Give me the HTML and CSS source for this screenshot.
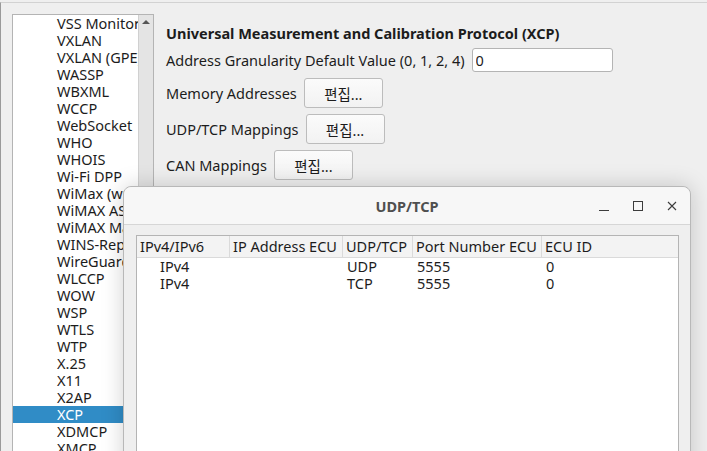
FILE: index.html
```html
<!DOCTYPE html>
<html lang="ko">
<head>
    <meta charset="UTF-8">
    <title>XCP</title>
    <link rel="stylesheet" href="styles.css">
</head>
<body>
    <div class="main">
        <div class="sidebar">
            <div class="listbox">
                <ul class="items">
                    <li>VSS Monitoring</li>
                    <li>VXLAN</li>
                    <li>VXLAN (GPE)</li>
                    <li>WASSP</li>
                    <li>WBXML</li>
                    <li>WCCP</li>
                    <li>WebSocket</li>
                    <li>WHO</li>
                    <li>WHOIS</li>
                    <li>Wi-Fi DPP</li>
                    <li>WiMax (wmx)</li>
                    <li>WiMAX ASN CP</li>
                    <li>WiMAX Mac-PHY</li>
                    <li>WINS-Replication</li>
                    <li>WireGuard</li>
                    <li>WLCCP</li>
                    <li>WOW</li>
                    <li>WSP</li>
                    <li>WTLS</li>
                    <li>WTP</li>
                    <li>X.25</li>
                    <li>X11</li>
                    <li>X2AP</li>
                    <li class="selected">XCP</li>
                    <li>XDMCP</li>
                    <li>XMCP</li>
                </ul>
                <div class="scrollbar">
                    <svg width="14" height="10" viewBox="0 0 14 10"><path d="M3 7 L7 3 L11 7 Z" fill="#555"/></svg>
                </div>
            </div>
        </div>

        <div class="prefs">
            <div class="prefs-title">Universal Measurement and Calibration Protocol (XCP)</div>
            <div class="row">
                <span>Address Granularity Default Value (0, 1, 2, 4)</span>
                <input class="field" type="text" value="0">
            </div>
            <div class="row">
                <span>Memory Addresses</span>
                <button class="btn">편집...</button>
            </div>
            <div class="row">
                <span>UDP/TCP Mappings</span>
                <button class="btn">편집...</button>
            </div>
            <div class="row">
                <span>CAN Mappings</span>
                <button class="btn">편집...</button>
            </div>
        </div>
    </div>

    <div class="dialog">
        <div class="titlebar">
            <span class="dialog-title">UDP/TCP</span>
            <div class="win-btns">
                <svg width="12" height="12" viewBox="0 0 12 12"><path d="M1 10.5 H11" stroke="#3c3c3c" stroke-width="1"/></svg>
                <svg width="12" height="12" viewBox="0 0 12 12"><rect x="1.5" y="1.5" width="9" height="9" fill="none" stroke="#3c3c3c" stroke-width="1"/></svg>
                <svg width="12" height="12" viewBox="0 0 12 12"><path d="M2 2 L10 10 M10 2 L2 10" stroke="#3c3c3c" stroke-width="1.1"/></svg>
            </div>
        </div>
        <div class="dialog-body">
            <div class="table">
                <div class="thead">
                    <div>IPv4/IPv6</div>
                    <div>IP Address ECU</div>
                    <div>UDP/TCP</div>
                    <div>Port Number ECU</div>
                    <div>ECU ID</div>
                </div>
                <div class="trow">
                    <div class="indent">IPv4</div>
                    <div></div>
                    <div>UDP</div>
                    <div>5555</div>
                    <div>0</div>
                </div>
                <div class="trow">
                    <div class="indent">IPv4</div>
                    <div></div>
                    <div>TCP</div>
                    <div>5555</div>
                    <div>0</div>
                </div>
            </div>
        </div>
    </div>
</body>
</html>
```

FILE: styles.css
```css
body {
    margin: 0;
    width: 707px;
    height: 451px;
    overflow: hidden;
    position: relative;
    background-color: #efefef;
    font-family: 'Noto Sans', 'Noto Sans CJK KR', sans-serif;
    font-size: 14.5px;
    color: #1c1c1c;
}

.main {
    display: flex;
    margin-top: 2px;
    border-top: 1px solid #d2d2d2;
    border-left: 1px solid #9a9a9a;
    height: 448px;
}

.sidebar {
    padding: 11px 0 0 11px;
}

.listbox {
    display: flex;
    width: 140px;
    height: 460px;
    background-color: white;
    border: 1px solid #b4b4b4;
}

.items {
    list-style: none;
    margin: 0;
    padding: 0;
    width: 125px;
    overflow: hidden;
}

.items li {
    height: 17px;
    line-height: 17px;
    padding-left: 44px;
    white-space: nowrap;
    overflow: hidden;
}

.items li.selected {
    background-color: #308cc6;
    color: white;
}

.scrollbar {
    width: 14px;
    background-color: #e4e4e4;
    border-left: 1px solid #d0d0d0;
}

.scrollbar svg {
    display: block;
    margin-top: 2px;
}

.prefs {
    padding: 20px 0 0 12px;
}

.prefs-title {
    font-weight: bold;
    height: 20px;
    line-height: 20px;
    margin-bottom: 5px;
    white-space: nowrap;
}

.row {
    display: flex;
    align-items: center;
    gap: 7px;
    margin-bottom: 6px;
    white-space: nowrap;
}

.field {
    width: 133px;
    height: 20px;
    border: 1px solid #b4b4b4;
    border-radius: 3px;
    padding: 1px 3px;
    font: inherit;
    color: #1c1c1c;
}

.btn {
    width: 79px;
    height: 30px;
    border: 1px solid #bcbcbc;
    border-radius: 3px;
    background: linear-gradient(#fbfbfb, #f2f2f2);
    font: inherit;
    color: #1c1c1c;
}

.dialog {
    position: absolute;
    left: 123px;
    top: 186px;
    width: 566px;
    height: 300px;
    background-color: #efefef;
    border: 1px solid #b8b8b8;
    border-radius: 8px 8px 0 0;
    box-shadow: 0 0 22px rgba(0, 0, 0, 0.18);
}

.titlebar {
    height: 37px;
    background-color: #f7f7f7;
    border-bottom: 1px solid #d6d6d6;
    border-radius: 8px 8px 0 0;
    display: flex;
    align-items: center;
    justify-content: center;
    position: relative;
}

.dialog-title {
    font-weight: bold;
    color: #4f4f4f;
}

.win-btns {
    position: absolute;
    right: 12px;
    top: 13px;
    display: flex;
    gap: 22px;
}

.win-btns svg {
    display: block;
}

.dialog-body {
    padding: 10px 11px 0 12px;
}

.table {
    background-color: white;
    border: 1px solid #b4b4b4;
    height: 260px;
}

.thead, .trow {
    display: grid;
    grid-template-columns: 93px 113px 70px 129px 1fr;
}

.thead {
    height: 21px;
    line-height: 21px;
    background-color: #f3f3f3;
    border-bottom: 1px solid #dadada;
}

.thead div {
    padding-left: 3px;
    border-right: 1px solid #dadada;
    white-space: nowrap;
    overflow: hidden;
}

.thead div:last-child {
    border-right: none;
}

.trow {
    height: 17px;
    line-height: 17px;
}

.trow div {
    padding-left: 4px;
}

.trow div.indent {
    padding-left: 23px;
}
```
